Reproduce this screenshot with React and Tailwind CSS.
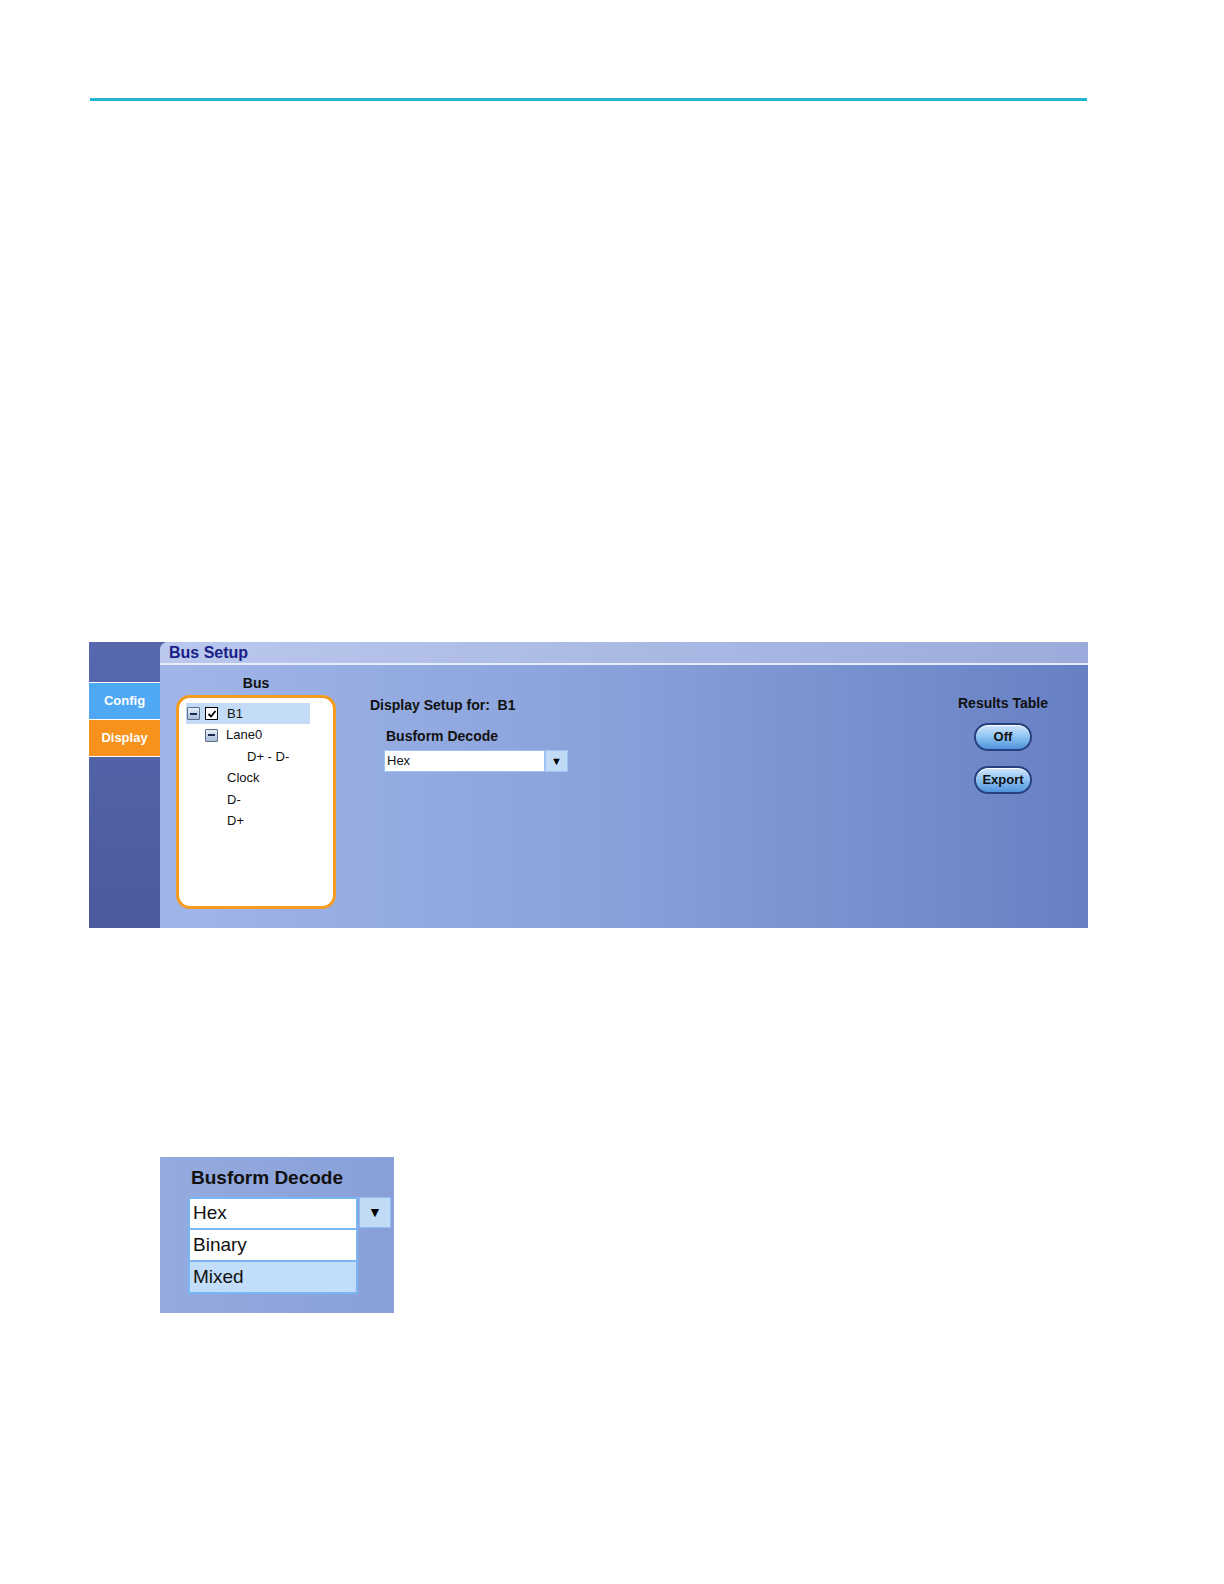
import React from "react";

const font = { fontFamily: '"Liberation Sans", Arial, sans-serif' };

const Minus = () => (
  <span className="inline-flex items-center justify-center w-[13px] h-[13px] border border-[#5a6c8a] bg-gradient-to-b from-[#e6eef8] to-[#a9bdd8] rounded-[1px]">
    <span className="block w-[7px] h-[2px] bg-[#1c2a52]" />
  </span>
);

const Check = () => (
  <span className="inline-flex items-center justify-center w-[13px] h-[13px] border-[1.5px] border-black bg-white">
    <svg width="10" height="10" viewBox="0 0 10 10">
      <path d="M1.5 5 L4 7.5 L8.5 2" stroke="black" strokeWidth="1.8" fill="none" />
    </svg>
  </span>
);

const PillButton = ({ children }) => (
  <button className="w-[58px] h-[28px] rounded-full border-2 border-[#27407e] bg-gradient-to-b from-[#cfe6fb] via-[#8cc2f2] to-[#4f92dc] text-[13px] font-bold text-[#111] shadow-[inset_0_1px_0_#ffffff]">
    {children}
  </button>
);

const BusSetup = () => (
  <div className="ml-[89px] w-[999px] h-[286px] flex bg-[#5262a8]">
    {/* left tabs */}
    <div className="w-[71px] flex flex-col bg-gradient-to-b from-[#5868ae] to-[#4b5a9e]">
      <div className="h-[40px]" />
      <div className="h-[37px] border-t border-white bg-[#4ea8f4] text-white text-[13px] font-bold flex items-center justify-center">
        Config
      </div>
      <div className="h-[38px] border-y border-white bg-[#f7921d] text-white text-[13px] font-bold flex items-center justify-center">
        Display
      </div>
    </div>
    {/* main */}
    <div className="flex-1 flex flex-col rounded-tl-[8px] overflow-hidden bg-gradient-to-r from-[#a1b6e8] via-[#88a1da] to-[#6780c4]">
      <div className="h-[23px] bg-gradient-to-r from-[#bac8ee] to-[#9cabdb] border-b-2 border-[#e6ecfa] pl-[9px] flex items-center">
        <span className="text-[16px] font-bold text-[#1b1f86]">Bus Setup</span>
      </div>
      <div className="flex-1 flex">
        {/* bus tree */}
        <div className="w-[175px] pl-[16px] pt-[10px]">
          <div className="w-[160px] text-center text-[14px] font-bold text-[#111] leading-[16px]">Bus</div>
          <div className="mt-[4px] w-[160px] h-[214px] rounded-[14px] border-[3px] border-[#f39c1f] bg-white pt-[5px] pl-[7px] text-[13px] text-[#111]">
            <div className="h-[21px] w-[124px] bg-[#c4dbf7] flex items-center gap-[5px] pl-[1px]">
              <Minus />
              <Check />
              <span className="ml-[4px]">B1</span>
            </div>
            <div className="h-[22px] flex items-center gap-[8px] pl-[19px]">
              <Minus />
              <span>Lane0</span>
            </div>
            <div className="h-[21px] flex items-center pl-[61px]">D+ - D-</div>
            <div className="h-[22px] flex items-center pl-[41px]">Clock</div>
            <div className="h-[21px] flex items-center pl-[41px]">D-</div>
            <div className="h-[22px] flex items-center pl-[41px]">D+</div>
          </div>
        </div>
        {/* display setup */}
        <div className="flex-1 pt-[32px] pl-[35px]">
          <div className="text-[14px] font-bold text-[#111] leading-[16px]">
            Display Setup for:&nbsp;&nbsp;B1
          </div>
          <div className="pl-[16px] mt-[15px] text-[14px] font-bold text-[#111] leading-[16px]">Busform Decode</div>
          <div className="ml-[14px] mt-[6px] flex h-[22px]">
            <div className="w-[161px] bg-white border border-[#9cc4f0] text-[13px] text-[#111] flex items-center pl-[2px]">
              Hex
            </div>
            <div className="w-[23px] bg-[#c1dbf7] border border-[#9cc4f0] flex items-center justify-center text-[11px] text-black">
              ▼
            </div>
          </div>
        </div>
        {/* results table */}
        <div className="w-[170px] pt-[30px] flex flex-col items-center">
          <div className="text-[14px] font-bold text-[#111] leading-[16px]">Results Table</div>
          <div className="mt-[12px]">
            <PillButton>Off</PillButton>
          </div>
          <div className="mt-[15px]">
            <PillButton>Export</PillButton>
          </div>
        </div>
      </div>
    </div>
  </div>
);

const DecodeDropdown = () => (
  <div className="ml-[160px] w-[234px] h-[156px] bg-gradient-to-r from-[#95abdf] to-[#889fd8] pl-[28px] pt-[10px]">
    <div className="pl-[3px] text-[19px] font-bold text-[#111] leading-[22px]">Busform Decode</div>
    <div className="mt-[8px] flex">
      <div className="w-[170px] flex flex-col">
        <div className="h-[33px] bg-white border-2 border-[#7ab6f2] text-[19px] text-[#111] flex items-center pl-[3px]">Hex</div>
        <div className="h-[32px] bg-white border-2 border-t-0 border-[#7ab6f2] text-[19px] text-[#111] flex items-center pl-[3px]">Binary</div>
        <div className="h-[32px] bg-[#c2ddf9] border-2 border-t-0 border-[#7ab6f2] text-[19px] text-[#111] flex items-center pl-[3px]">Mixed</div>
      </div>
      <div className="ml-[1px] w-[32px] h-[31px] bg-[#c1dbf7] border border-[#8fbdf0] flex items-center justify-center text-[14px] text-black">
        ▼
      </div>
    </div>
  </div>
);

export default function App() {
  return (
    <div className="bg-white" style={font}>
      <div className="h-[98px]" />
      <div className="ml-[90px] w-[997px] h-[3px] bg-[#22b5d4]" />
      <div className="h-[541px]" />
      <BusSetup />
      <div className="h-[229px]" />
      <DecodeDropdown />
    </div>
  );
}
